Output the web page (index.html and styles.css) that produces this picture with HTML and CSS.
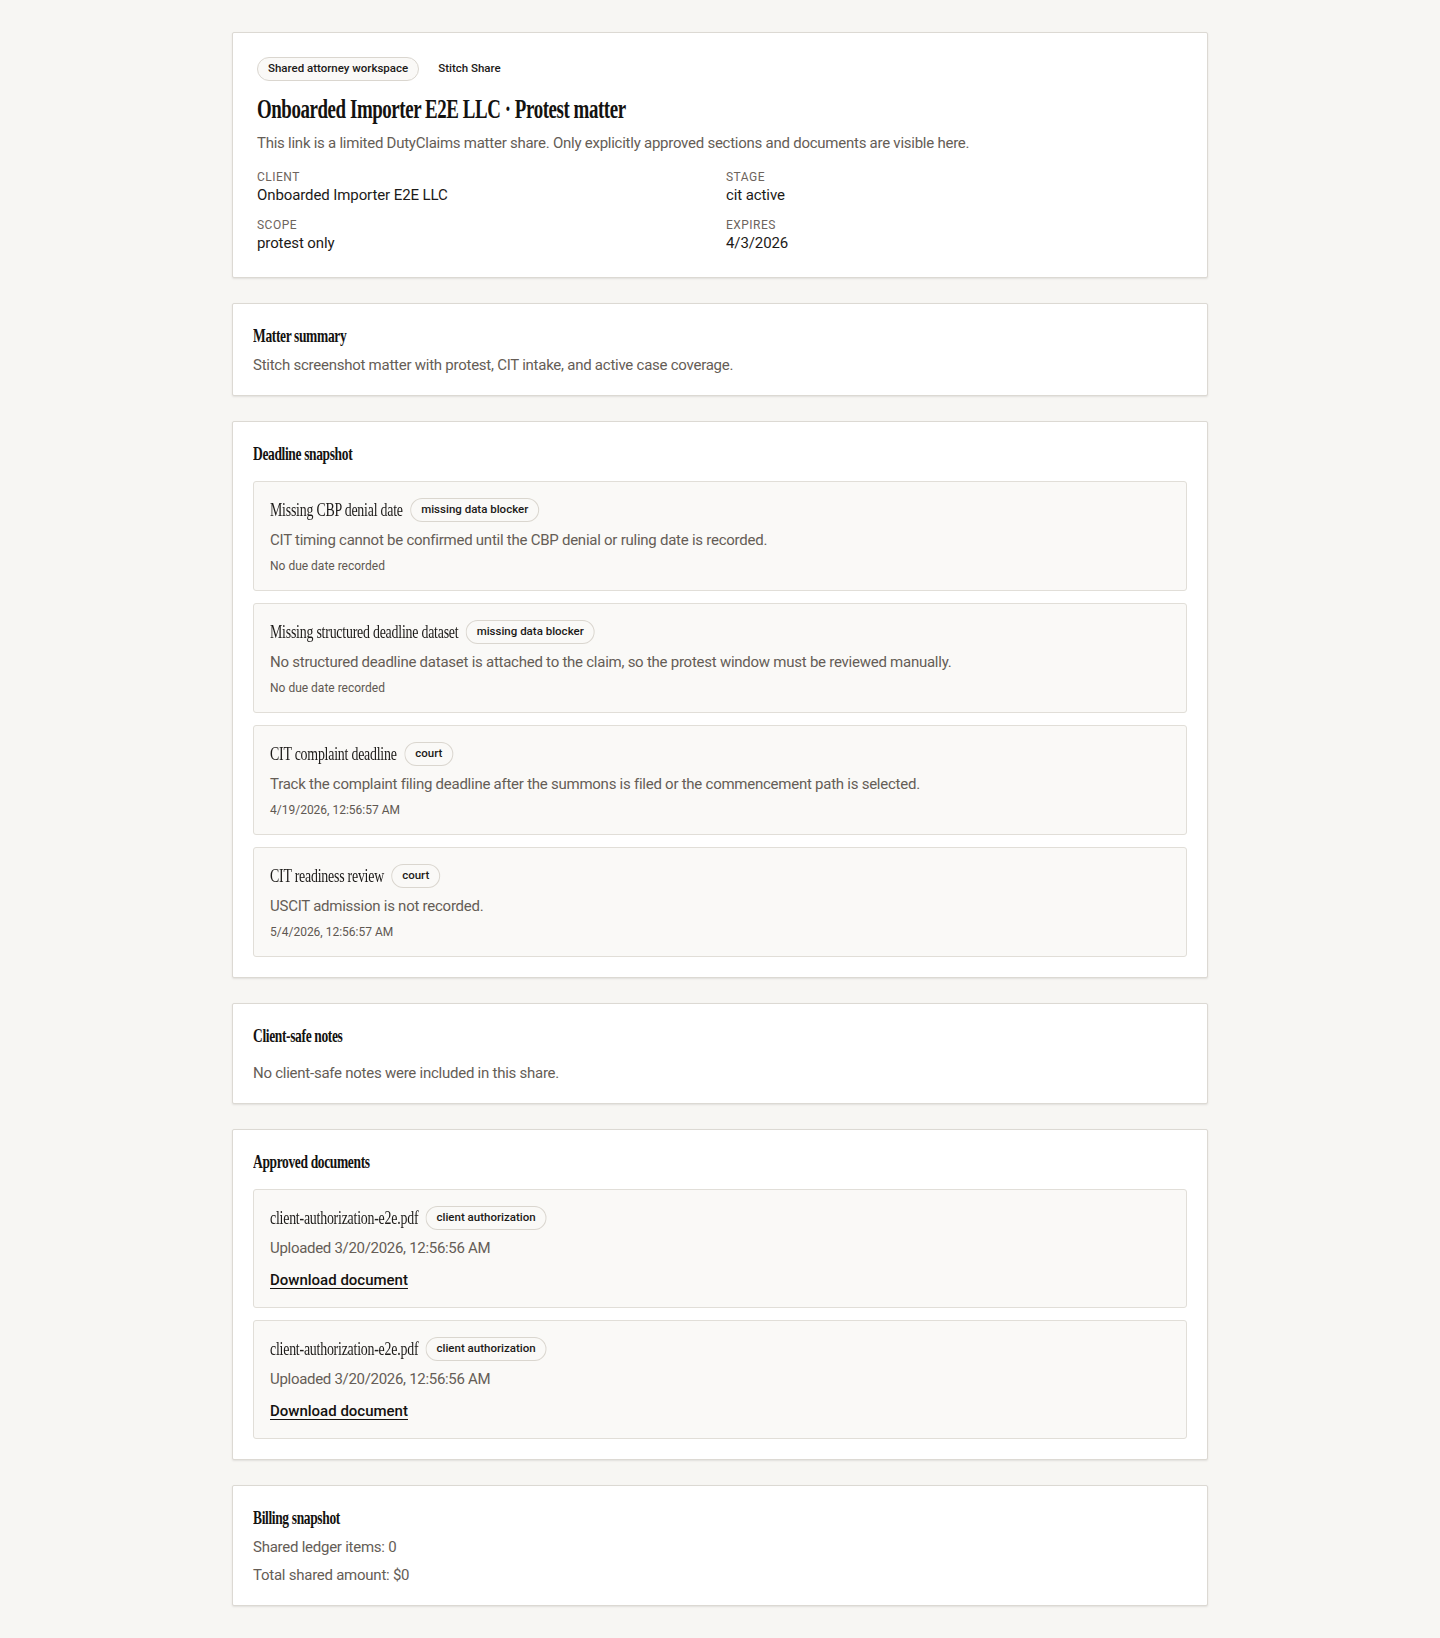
FILE: index.html
```html
<!DOCTYPE html>
<html lang="en">
<head>
<meta charset="utf-8">
<title>Onboarded Importer E2E LLC · Protest matter</title>
<link rel="stylesheet" href="styles.css">
</head>
<body>
<main class="page">
  <section class="card card-hero">
    <div class="pill-row">
      <span class="pill">Shared attorney workspace</span>
      <span class="pill pill-plain">Stitch Share</span>
    </div>
    <h1 class="hero-title">Onboarded Importer E2E LLC · Protest matter</h1>
    <p class="hero-desc">This link is a limited DutyClaims matter share. Only explicitly approved sections and documents are visible here.</p>
    <dl class="facts">
      <div class="fact"><dt>Client</dt><dd>Onboarded Importer E2E LLC</dd></div>
      <div class="fact"><dt>Stage</dt><dd>cit active</dd></div>
      <div class="fact"><dt>Scope</dt><dd>protest only</dd></div>
      <div class="fact"><dt>Expires</dt><dd>4/3/2026</dd></div>
    </dl>
  </section>

  <section class="card">
    <h2 class="section-title">Matter summary</h2>
    <p class="body-text gap-s">Stitch screenshot matter with protest, CIT intake, and active case coverage.</p>
  </section>

  <section class="card card-list">
    <h2 class="section-title">Deadline snapshot</h2>
    <div class="item-list">
      <article class="item">
        <div class="item-head"><h3 class="item-title">Missing CBP denial date</h3><span class="badge">missing data blocker</span></div>
        <p class="item-body">CIT timing cannot be confirmed until the CBP denial or ruling date is recorded.</p>
        <p class="item-meta">No due date recorded</p>
      </article>
      <article class="item">
        <div class="item-head"><h3 class="item-title">Missing structured deadline dataset</h3><span class="badge">missing data blocker</span></div>
        <p class="item-body">No structured deadline dataset is attached to the claim, so the protest window must be reviewed manually.</p>
        <p class="item-meta">No due date recorded</p>
      </article>
      <article class="item">
        <div class="item-head"><h3 class="item-title">CIT complaint deadline</h3><span class="badge">court</span></div>
        <p class="item-body">Track the complaint filing deadline after the summons is filed or the commencement path is selected.</p>
        <p class="item-meta">4/19/2026, 12:56:57 AM</p>
      </article>
      <article class="item">
        <div class="item-head"><h3 class="item-title">CIT readiness review</h3><span class="badge">court</span></div>
        <p class="item-body">USCIT admission is not recorded.</p>
        <p class="item-meta">5/4/2026, 12:56:57 AM</p>
      </article>
    </div>
  </section>

  <section class="card">
    <h2 class="section-title">Client-safe notes</h2>
    <p class="body-text gap-m">No client-safe notes were included in this share.</p>
  </section>

  <section class="card card-list">
    <h2 class="section-title">Approved documents</h2>
    <div class="item-list">
      <article class="item doc">
        <div class="item-head"><h3 class="item-title">client-authorization-e2e.pdf</h3><span class="badge">client authorization</span></div>
        <p class="doc-uploaded">Uploaded 3/20/2026, 12:56:56 AM</p>
        <a class="doc-link" href="#">Download document</a>
      </article>
      <article class="item doc">
        <div class="item-head"><h3 class="item-title">client-authorization-e2e.pdf</h3><span class="badge">client authorization</span></div>
        <p class="doc-uploaded">Uploaded 3/20/2026, 12:56:56 AM</p>
        <a class="doc-link" href="#">Download document</a>
      </article>
    </div>
  </section>

  <section class="card">
    <h2 class="section-title">Billing snapshot</h2>
    <div class="billing">
      <p class="body-text">Shared ledger items: 0</p>
      <p class="body-text">Total shared amount: $0</p>
    </div>
  </section>
</main>
</body>
</html>
```

FILE: styles.css
```css
* {
  box-sizing: border-box;
}

html, body {
  margin: 0;
  padding: 0;
}

body {
  background: #f7f6f3;
  color: #1c1a18;
  font-family: Roboto, "Liberation Sans", Arial, sans-serif;
  font-size: 15px;
  line-height: 24px;
}

p, h1, h2, h3, dl, dd, dt {
  margin: 0;
}

.page {
  width: 976px;
  margin: 0 auto;
  padding: 32px 0 33px;
  display: flex;
  flex-direction: column;
  gap: 25px;
}

.card {
  background: #ffffff;
  border: 1px solid #dcd9d3;
  border-radius: 2px;
  box-shadow: 0 1px 2px rgba(40, 34, 28, 0.10);
  padding: 20px 20px 18px;
}

.card-list {
  padding-bottom: 20px;
}

.card-hero {
  padding: 24px;
}

/* Hero */
.pill-row {
  display: flex;
  align-items: center;
  gap: 8px;
}

.pill {
  display: inline-flex;
  align-items: center;
  height: 24px;
  padding: 0 10px;
  border: 1px solid #dad6cf;
  border-radius: 999px;
  background: #faf9f7;
  font-size: 11.5px;
  font-weight: 500;
  line-height: 1;
  color: #1c1a18;
}

.pill-plain {
  border-color: transparent;
  background: transparent;
}

.hero-title {
  margin-top: 12px;
  font-family: "Liberation Serif", "Times New Roman", serif;
  font-weight: 700;
  font-size: 27px;
  line-height: 32px;
  letter-spacing: -0.6px;
  color: #141210;
  transform: scaleX(0.7);
  transform-origin: left center;
  white-space: nowrap;
}

.hero-desc {
  margin-top: 6px;
  color: #655d56;
  font-size: 15px;
  line-height: 24px;
  letter-spacing: -0.25px;
}

.facts {
  margin-top: 14px;
  display: grid;
  grid-template-columns: 1fr 1fr;
  column-gap: 12px;
  row-gap: 12px;
}

.fact dt {
  font-size: 12px;
  line-height: 16px;
  text-transform: uppercase;
  letter-spacing: 0.04em;
  color: #6d645d;
}

.fact dd {
  font-size: 15px;
  line-height: 20px;
  letter-spacing: -0.1px;
  color: #1c1a18;
}

/* Sections */
.section-title {
  font-family: "Liberation Serif", "Times New Roman", serif;
  font-weight: 700;
  font-size: 19px;
  line-height: 23px;
  letter-spacing: -0.5px;
  color: #141210;
  transform: scaleX(0.71);
  transform-origin: left center;
  white-space: nowrap;
}

.body-text {
  color: #655d56;
  font-size: 15px;
  line-height: 24px;
  letter-spacing: -0.25px;
}

.gap-s {
  margin-top: 6px;
}

.gap-m {
  margin-top: 14px;
}

.billing {
  margin-top: 6px;
  display: flex;
  flex-direction: column;
  gap: 4px;
}

/* Items */
.item-list {
  margin-top: 16px;
  display: flex;
  flex-direction: column;
  gap: 12px;
}

.item {
  background: #faf9f7;
  border: 1px solid #e1ded8;
  border-radius: 3px;
  padding: 16px 16px 15px;
}

.item-head {
  display: flex;
  align-items: center;
  gap: 10px;
  height: 24px;
  transform: scaleX(0.73);
  transform-origin: left center;
}

.item-title {
  font-family: "Liberation Serif", "Times New Roman", serif;
  font-weight: 400;
  font-size: 19px;
  line-height: 24px;
  letter-spacing: -0.3px;
  color: #1c1a18;
  white-space: nowrap;
}

.badge {
  display: inline-flex;
  align-items: center;
  flex-shrink: 0;
  height: 24px;
  padding: 0 10px;
  border: 1px solid #dad6cf;
  border-radius: 999px;
  background: #faf9f7;
  font-size: 11.5px;
  font-weight: 500;
  line-height: 1;
  color: #1c1a18;
  white-space: nowrap;
  transform: scaleX(1.3699);
  transform-origin: left center;
}

.item-body {
  margin-top: 7px;
  color: #655d56;
  font-size: 15px;
  line-height: 22px;
  letter-spacing: -0.25px;
}

.item-meta {
  margin-top: 7px;
  color: #5f5852;
  font-size: 12px;
  line-height: 17px;
}

.doc-uploaded {
  margin-top: 6px;
  color: #655d56;
  font-size: 15px;
  line-height: 24px;
  letter-spacing: -0.3px;
}

.doc-link {
  display: inline-block;
  margin-top: 8px;
  color: #141210;
  font-size: 15px;
  font-weight: 500;
  line-height: 24px;
  text-decoration: underline;
  text-underline-offset: 3px;
  text-decoration-thickness: 1px;
}
```
